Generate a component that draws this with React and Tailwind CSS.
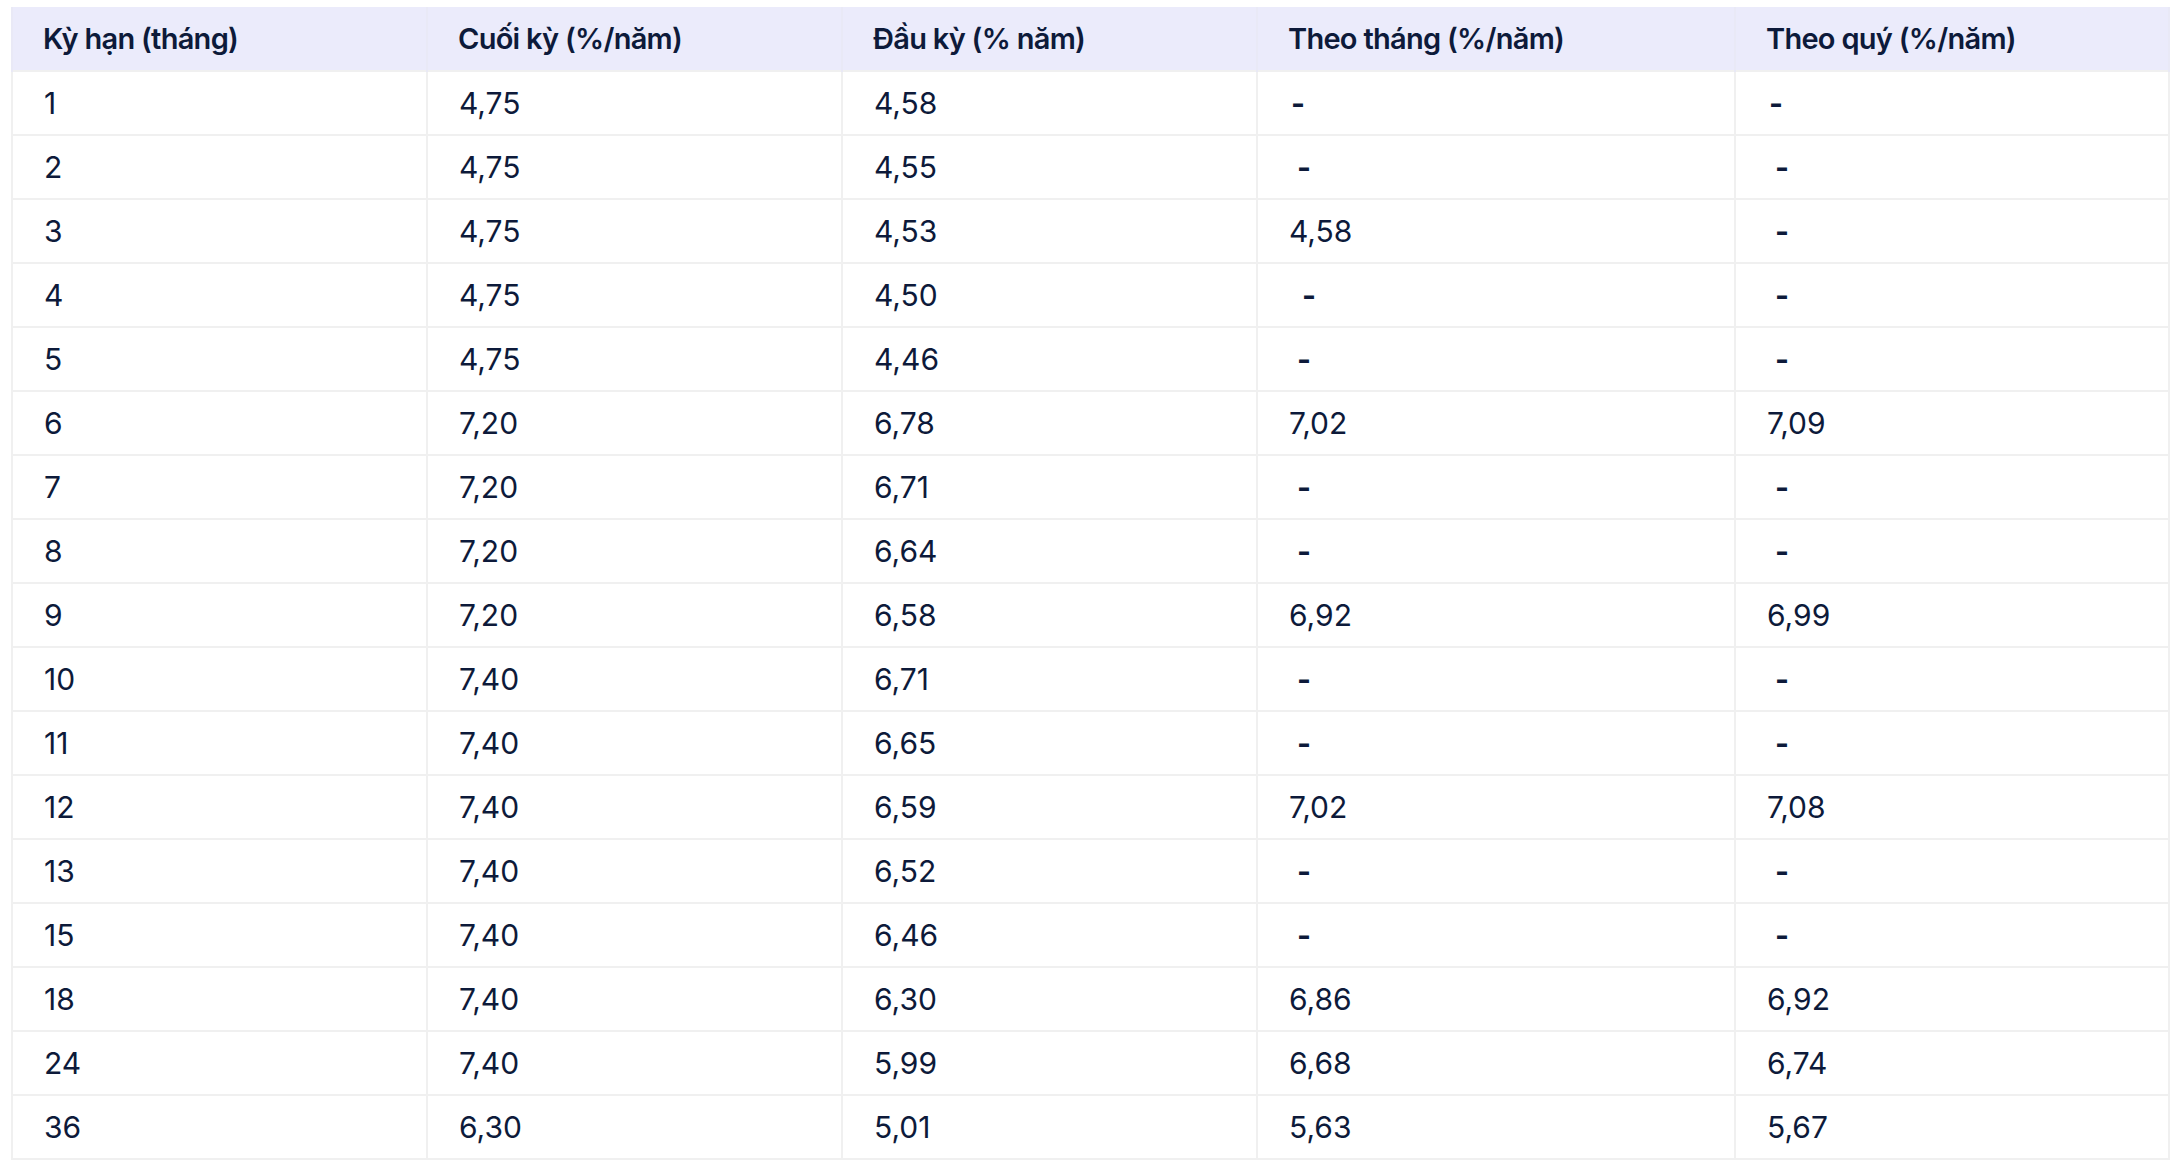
import React from 'react';

const headers = [
  'Kỳ hạn (tháng)',
  'Cuối kỳ (%/năm)',
  'Đầu kỳ (% năm)',
  'Theo tháng (%/năm)',
  'Theo quý (%/năm)',
];

const widths = ['w-[415px]', 'w-[415px]', 'w-[415px]', 'w-[478px]', 'w-[434px]'];

// offset = small shift of the "-" seen in the source table
const rows = [
  ['1', '4,75', '4,58', ['-', 0], ['-', 0]],
  ['2', '4,75', '4,55', ['-', 1], ['-', 1]],
  ['3', '4,75', '4,53', '4,58', ['-', 1]],
  ['4', '4,75', '4,50', ['-', 2], ['-', 1]],
  ['5', '4,75', '4,46', ['-', 1], ['-', 1]],
  ['6', '7,20', '6,78', '7,02', '7,09'],
  ['7', '7,20', '6,71', ['-', 1], ['-', 1]],
  ['8', '7,20', '6,64', ['-', 1], ['-', 1]],
  ['9', '7,20', '6,58', '6,92', '6,99'],
  ['10', '7,40', '6,71', ['-', 1], ['-', 1]],
  ['11', '7,40', '6,65', ['-', 1], ['-', 1]],
  ['12', '7,40', '6,59', '7,02', '7,08'],
  ['13', '7,40', '6,52', ['-', 1], ['-', 1]],
  ['15', '7,40', '6,46', ['-', 1], ['-', 1]],
  ['18', '7,40', '6,30', '6,86', '6,92'],
  ['24', '7,40', '5,99', '6,68', '6,74'],
  ['36', '6,30', '5,01', '5,63', '5,67'],
];

const offsets = ['ml-[2px]', 'ml-[8px]', 'ml-[13px]'];

const Cell = ({ value }) => {
  if (Array.isArray(value)) {
    return <span className={`inline-block font-bold ${offsets[value[1]]}`}>{value[0]}</span>;
  }
  return value;
};

const App = () => {
  return (
    <div className="min-h-screen bg-white pl-[11px] pt-[7px] font-['Inter',sans-serif] text-[#0d1a3a]">
      <table className="w-[2157px] table-fixed border-collapse">
        <thead>
          <tr className="bg-[#ebebfb]">
            {headers.map((h, i) => (
              <th
                key={h}
                className={`${widths[i]} h-[64px] border-x-2 border-[#e9e9f6] pl-[30px] text-left text-[29px] font-semibold tracking-[-0.025em]`}
              >
                {h}
              </th>
            ))}
          </tr>
        </thead>
        <tbody>
          {rows.map((row) => (
            <tr key={row[0]} className="h-[64px]">
              {row.map((cell, i) => (
                <td
                  key={i}
                  className="border-2 border-[#f0f0f0] pl-[31px] text-[30px]"
                >
                  <Cell value={cell} />
                </td>
              ))}
            </tr>
          ))}
        </tbody>
      </table>
    </div>
  );
};

export default App;
